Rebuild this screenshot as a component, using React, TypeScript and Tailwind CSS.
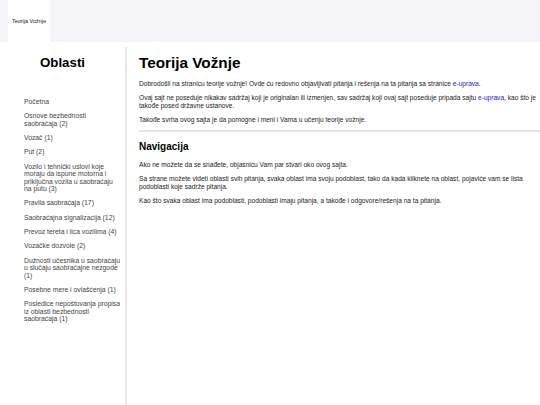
import React from "react";

const items: string[][] = [
  ["Početna"],
  ["Osnove bezbednosti", "saobraćaja (2)"],
  ["Vozač (1)"],
  ["Put (2)"],
  ["Vozilo i tehnički uslovi koje", "moraju da ispune motorna i", "priključna vozila u saobraćaju", "na putu (3)"],
  ["Pravila saobraćaja (17)"],
  ["Saobraćajna signalizacija (12)"],
  ["Prevoz tereta i lica vozilima (4)"],
  ["Vozačke dozvole (2)"],
  ["Dužnosti učesnika u saobraćaju", "u slučaju saobraćajne nezgode", "(1)"],
  ["Posebne mere i ovlašćenja (1)"],
  ["Posledice nepoštovanja propisa", "iz oblasti bezbednosti", "saobraćaja (1)"],
];

export default function App() {
  return (
    <div className="w-[540px] h-[405px] bg-white overflow-hidden text-black" style={{ fontFamily: '"Liberation Sans", Arial, sans-serif' }}>
      <div className="h-[42px] bg-[#f4f4f9] pl-[8px] flex">
        <div className="w-[42px] h-full bg-white flex items-center justify-center text-[5.5px] text-[#222] whitespace-nowrap">
          Teorija Vožnje
        </div>
      </div>
      <div className="flex mt-[5px] h-[358px]">
        <div className="w-[127px] shrink-0 border-r-2 border-[#e8e8e8] pl-[24px] pr-[2px]">
          <h2 className="text-[13.3px] font-bold text-center mt-[6px] leading-[20px] -ml-[24px] -mr-[2px]">Oblasti</h2>
          <ul className="mt-[25px] flex flex-col gap-[6.8px]">
            {items.map((lines) => (
              <li key={lines.join(" ")} className="text-[6.8px] leading-[7.5px] text-[#444] whitespace-nowrap">
                {lines.map((l) => (
                  <span key={l} className="block">{l}</span>
                ))}
              </li>
            ))}
          </ul>
        </div>
        <div className="flex-1 pl-[12px]">
          <h1 className="text-[15.3px] font-bold mt-[6px] leading-[20px]">Teorija Vožnje</h1>
          <div className="text-[6.6px] leading-[7.5px] text-[#222] mt-[7px] flex flex-col gap-[6.9px]">
            <p>
              Dobrodošli na stranicu teorije vožnje! Ovde ću redovno objavljivati pitanja i rešenja na ta pitanja sa stranice{" "}
              <span className="text-[#2222cc]">e-uprava</span>.
            </p>
            <p>
              Ovaj sajt ne poseduje nikakav sadržaj koji je originalan ili izmenjen, sav sadržaj koji ovaj sajt poseduje pripada sajtu{" "}
              <span className="text-[#2222cc]">e-uprava</span>, kao što je takođe posed državne ustanove.
            </p>
            <p>Takođe svrha ovog sajta je da pomogne i meni i Vama u učenju teorije vožnje.</p>
          </div>
          <div className="h-[2px] bg-[#e6e6e6] mt-[6.5px]" />
          <h2 className="text-[10px] font-bold mt-[9px] leading-[12px]">Navigacija</h2>
          <div className="text-[6.6px] leading-[7.5px] text-[#222] mt-[7.5px] flex flex-col gap-[6.9px]">
            <p>Ako ne možete da se snađete, objasniću Vam par stvari oko ovog sajta.</p>
            <p>
              Sa strane možete videti oblasti svih pitanja, svaka oblast ima svoju podoblast, tako da kada kliknete na oblast, pojaviće vam se lista podoblasti koje sadrže pitanja.
            </p>
            <p>Kao što svaka oblast ima podoblasti, podoblasti imaju pitanja, a takođe i odgovore/rešenja na ta pitanja.</p>
          </div>
        </div>
      </div>
    </div>
  );
}
